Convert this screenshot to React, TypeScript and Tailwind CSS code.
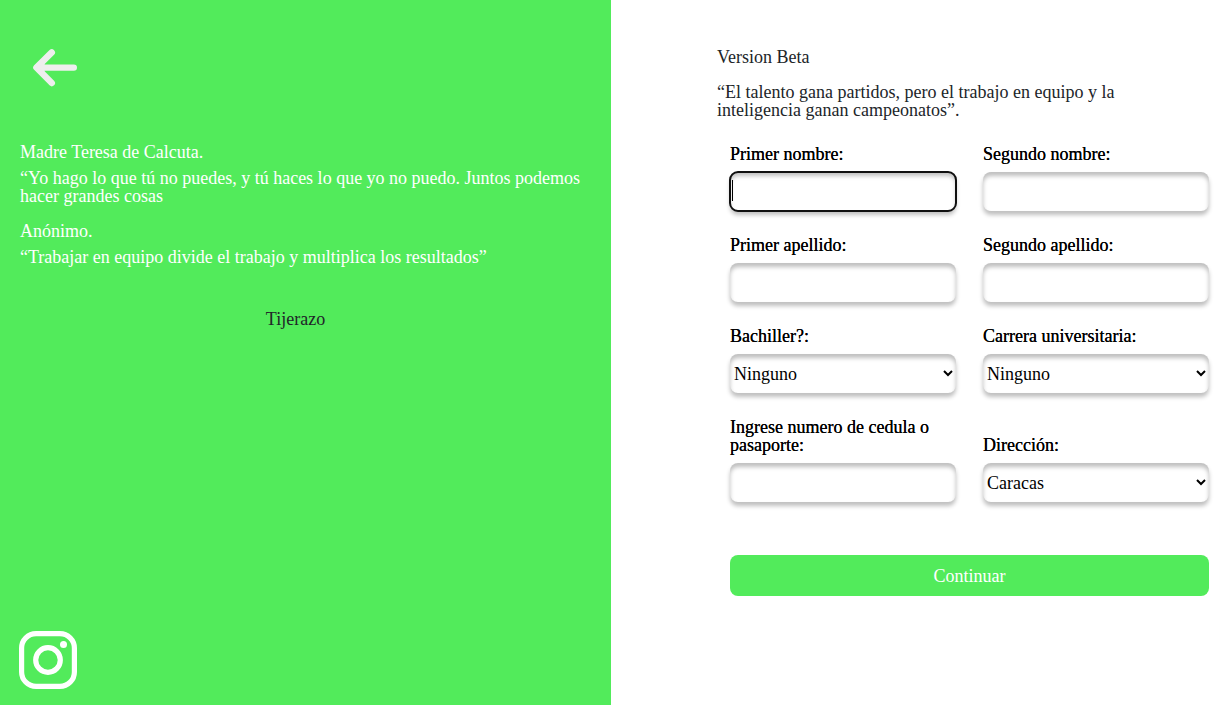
import React from "react";

const fieldClass =
  "peer block h-[39px] w-full rounded-lg border-0 bg-white text-lg/[18px] text-black shadow-[0_4px_4px_rgba(0,0,0,0.25),inset_0_4px_4px_rgba(0,0,0,0.25)] focus:outline-2 focus:-outline-offset-1 focus:outline-[#101010]";

function Field({ id, label, children }: { id: string; label: string; children: React.ReactNode }) {
  return (
    <div className="flex flex-col justify-end gap-[9px]">
      <label htmlFor={id} className="text-black [text-shadow:0_0_0_#000]">
        {label}
      </label>
      {children}
    </div>
  );
}

function TextField({ id, label, autoFocus }: { id: string; label: string; autoFocus?: boolean }) {
  return (
    <Field id={id} label={label}>
      <div className="relative">
        <input id={id} name={id} type="text" placeholder=" " autoFocus={autoFocus} className={`${fieldClass} px-0.5`} />
        {/* Steady caret while the focused field is still empty */}
        <span
          aria-hidden="true"
          className="pointer-events-none absolute top-2 left-0.5 hidden h-[21px] w-px bg-black peer-[:focus:placeholder-shown]:block"
        />
      </div>
    </Field>
  );
}

function SelectField({ id, label, options }: { id: string; label: string; options: string[] }) {
  return (
    <Field id={id} label={label}>
      <select id={id} name={id} className={fieldClass}>
        {options.map((option) => (
          <option key={option}>{option}</option>
        ))}
      </select>
    </Field>
  );
}

function ArrowIcon() {
  return (
    <svg width="46" height="38" viewBox="0 0 46 38" fill="none" stroke="#eeeeee" strokeWidth="6.4" strokeLinecap="round" strokeLinejoin="round" aria-hidden="true">
      <path d="M19.8 3.4 4.4 18.6l15.4 15.4M5 18.6h36.8" />
      <path d="M4.4 18.6l7-6v12z" fill="#eeeeee" strokeWidth="2" />
    </svg>
  );
}

function InstagramIcon() {
  return (
    <svg width="58" height="58" viewBox="0 0 58 58" fill="none" stroke="#fff" strokeWidth="5.2" aria-hidden="true">
      <rect x="2.6" y="2.6" width="52.8" height="52.8" rx="14.5" />
      <circle cx="29" cy="29" r="12.3" />
      <circle cx="44.5" cy="13.5" r="3.5" fill="#fff" stroke="none" />
    </svg>
  );
}

export default function App() {
  return (
    <div className="flex min-h-screen bg-white font-['Liberation_Serif',serif] text-lg/[18px] text-[#212529]">
      <aside className="flex w-[49.8%] flex-col bg-[#52eb5b] px-5 pt-[49px] pb-4 text-white">
        <a href="#volver" aria-label="Volver" className="ml-3 self-start">
          <ArrowIcon />
        </a>
        <div className="mt-14 flex flex-col gap-2">
          <h2>Madre Teresa de Calcuta.</h2>
          <p>“Yo hago lo que tú no puedes, y tú haces lo que yo no puedo. Juntos podemos hacer grandes cosas</p>
        </div>
        <div className="mt-[17px] flex flex-col gap-2">
          <h2>Anónimo.</h2>
          <p>“Trabajar en equipo divide el trabajo y multiplica los resultados”</p>
        </div>
        <p className="mt-11 pr-5 text-center text-[#212529]">Tijerazo</p>
        <a href="#instagram" aria-label="Instagram" className="-ml-px mt-auto self-start">
          <InstagramIcon />
        </a>
      </aside>
      <main className="flex-1 pt-12 pr-[18px] pb-12 pl-[106px]">
        <h1>Version Beta</h1>
        <p className="mt-[17px] max-w-[430px]">
          “El talento gana partidos, pero el trabajo en equipo y la inteligencia ganan campeonatos”.
        </p>
        <form className="mt-[26px] ml-[13px]" onSubmit={(event) => event.preventDefault()}>
          <div className="grid grid-cols-2 gap-x-[27px] gap-y-[25px]">
            <TextField id="primer-nombre" label="Primer nombre:" autoFocus />
            <TextField id="segundo-nombre" label="Segundo nombre:" />
            <TextField id="primer-apellido" label="Primer apellido:" />
            <TextField id="segundo-apellido" label="Segundo apellido:" />
            <SelectField id="bachiller" label="Bachiller?:" options={["Ninguno"]} />
            <SelectField id="carrera" label="Carrera universitaria:" options={["Ninguno"]} />
            <TextField id="documento" label="Ingrese numero de cedula o pasaporte:" />
            <SelectField id="direccion" label="Dirección:" options={["Caracas"]} />
          </div>
          <button type="submit" className="mt-[53px] h-[41px] w-full rounded-lg bg-[#52eb5b] text-white">
            Continuar
          </button>
        </form>
      </main>
    </div>
  );
}
